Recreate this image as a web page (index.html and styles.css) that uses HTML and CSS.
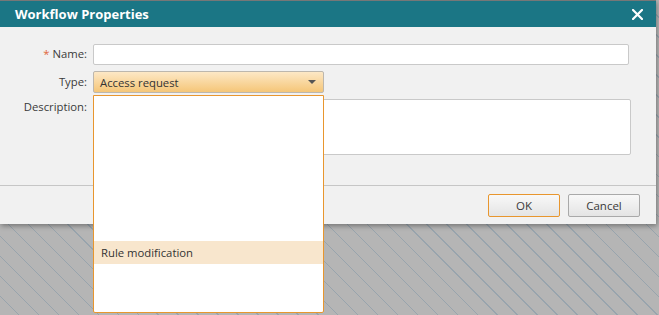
FILE: index.html
```html
<!DOCTYPE html>
<html lang="en">
<head>
    <meta charset="UTF-8">
    <title>Workflow Properties</title>
    <link rel="stylesheet" href="styles.css">
</head>
<body>

<div class="dialog">
    <div class="titlebar">
        <span class="title">Workflow Properties</span>
        <svg class="close" width="11" height="11" viewBox="0 0 11 11">
            <path d="M1 1L10 10M10 1L1 10" stroke="#fff" stroke-width="2.2" stroke-linecap="square"/>
        </svg>
    </div>

    <form class="content">
        <label class="field-label" for="name"><span class="req">*</span> Name:</label>
        <input class="text-input" type="text" id="name">

        <label class="field-label type-label" for="type">Type:</label>
        <div class="select" id="type">
            <span>Access request</span>
            <span class="arrow"></span>
        </div>

        <label class="field-label desc-label" for="desc">Description:</label>
        <textarea class="text-area" id="desc"></textarea>
    </form>

    <div class="footer">
        <button class="btn btn-primary" type="button">OK</button>
        <button class="btn" type="button">Cancel</button>
    </div>
</div>

<!-- open list of the Type select -->
<ul class="dropdown">
    <li class="option selected">Rule modification</li>
</ul>

</body>
</html>
```

FILE: styles.css
```css
body {
    margin: 0;
    height: 315px;
    overflow: hidden;
    font-family: "Open Sans", "Segoe UI", sans-serif;
    font-size: 11.3px;
    color: #3a3a3a;
    background-color: #b5b5b5;
    background-image: repeating-linear-gradient(45deg, #b5b5b5 0, #b5b5b5 13px, #98a4ad 13px, #98a4ad 14.1px);
}
.dialog {
    width: 656px;
    background-color: #f1f1f1;
    border-top: 1px solid #777;
    box-shadow: 1px 2px 5px rgba(0, 0, 0, 0.35);
}
.titlebar {
    height: 26px;
    background-color: #1b7685;
    display: flex;
    align-items: center;
    justify-content: space-between;
    padding: 0 13px 0 15px;
}
.title {
    color: #fff;
    font-weight: bold;
    font-size: 13px;
}
.content {
    display: grid;
    grid-template-columns: 87px 1fr;
    column-gap: 6px;
    row-gap: 6px;
    padding: 17px 25px 30px 0;
    margin: 0;
}
.field-label {
    text-align: right;
    line-height: 20px;
}
.type-label {
    line-height: 22px;
}
.desc-label {
    line-height: 16px;
}
.req {
    color: #e0663a;
}
.text-input {
    height: 21px;
    box-sizing: border-box;
    border: 1px solid #c9c9c9;
    border-radius: 2px;
    background: #fff;
    margin-right: 2px;
}
.select {
    width: 231px;
    height: 22px;
    box-sizing: border-box;
    border: 1px solid #bdb7ad;
    border-radius: 2px;
    background: linear-gradient(#fde8c6, #f5c678);
    display: flex;
    align-items: center;
    justify-content: space-between;
    padding: 0 7px 0 6px;
    color: #333;
}
.arrow {
    width: 0;
    height: 0;
    border-left: 4px solid transparent;
    border-right: 4px solid transparent;
    border-top: 4px solid #555;
}
.text-area {
    height: 56px;
    box-sizing: border-box;
    border: 1px solid #c9c9c9;
    border-radius: 2px;
    background: #fff;
    resize: none;
    font-family: inherit;
}
.footer {
    border-top: 1px solid #c6c6c6;
    height: 39px;
    display: flex;
    justify-content: flex-end;
    gap: 8px;
    padding: 8px 16px 0 0;
    box-sizing: border-box;
}
.btn {
    width: 72px;
    height: 23px;
    border: 1px solid #a9a9a9;
    border-radius: 2px;
    background: linear-gradient(#f8f8f8, #e4e4e4);
    font-family: inherit;
    font-size: 11.5px;
    color: #3a3a3a;
    padding: 0;
}
.btn-primary {
    border-color: #e8962e;
}
.dropdown {
    position: absolute;
    left: 93px;
    top: 95px;
    width: 231px;
    height: 218px;
    box-sizing: border-box;
    margin: 0;
    padding: 145px 0 0;
    list-style: none;
    background: #fff;
    border: 1px solid #e8962e;
    border-radius: 0 0 2px 2px;
}
.option {
    height: 23px;
    line-height: 23px;
    padding-left: 7px;
    color: #333;
}
.selected {
    background-color: #f8e6cd;
}
```
